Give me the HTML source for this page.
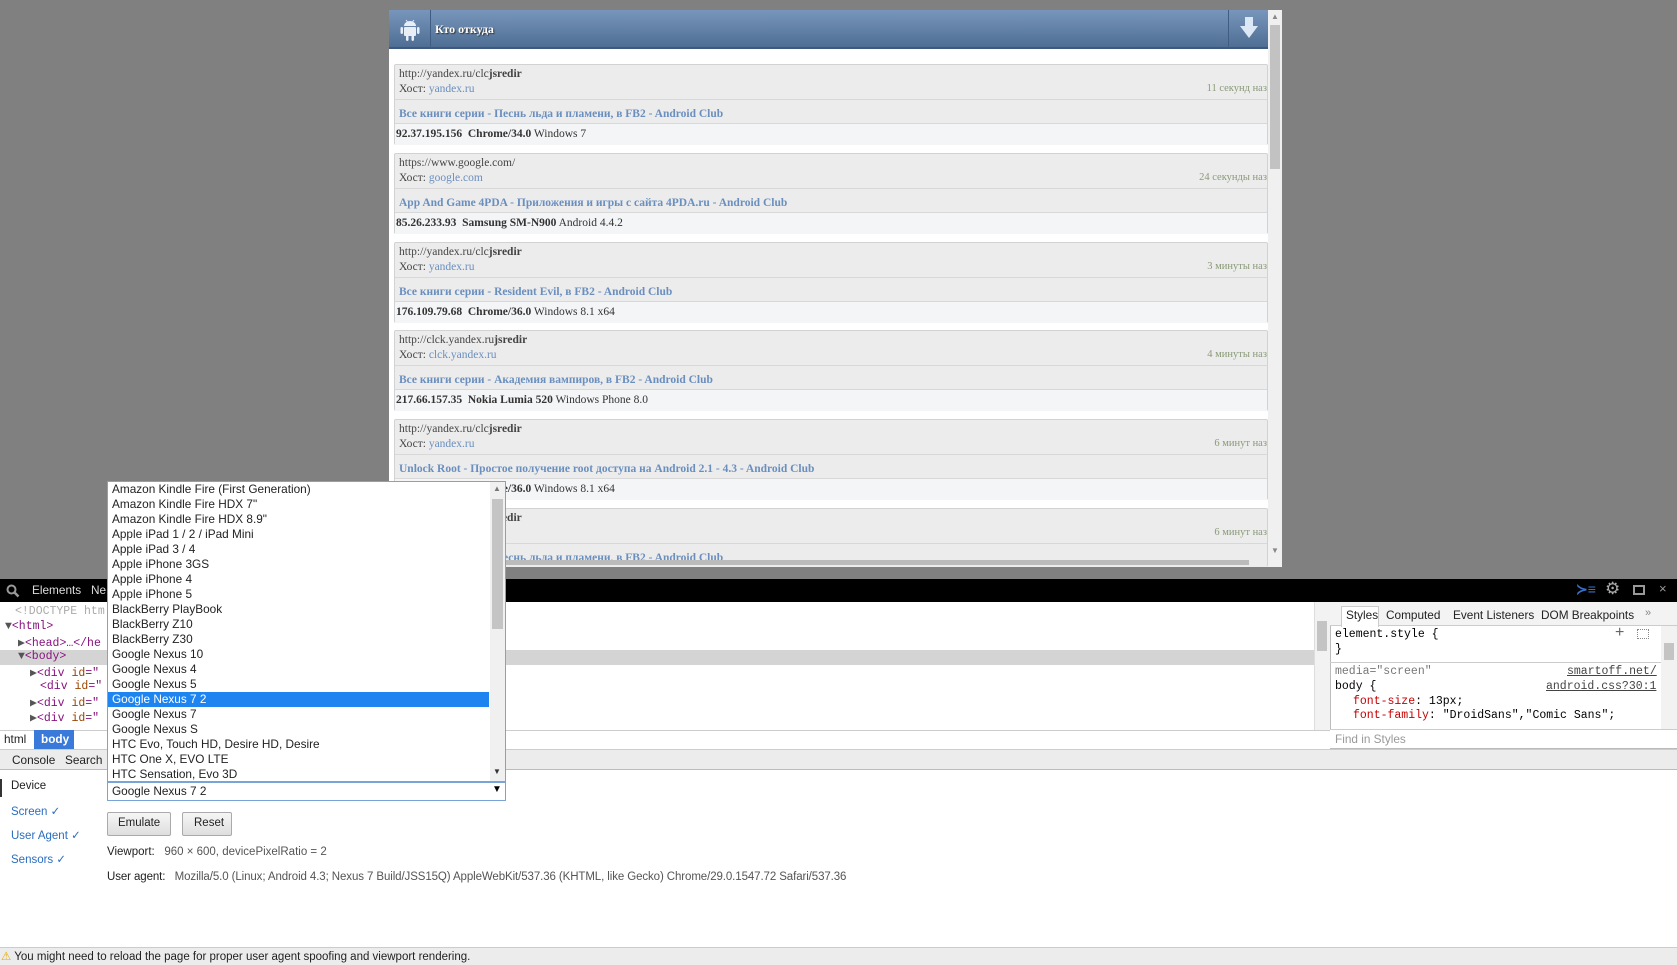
<!DOCTYPE html>
<html><head><meta charset="utf-8">
<style>
*{margin:0;padding:0;box-sizing:border-box}
body{width:1677px;height:965px;position:relative;overflow:hidden;background:#808080;font-family:"Liberation Sans",sans-serif}
.a{position:absolute;white-space:nowrap}
.pg{font-family:"Liberation Serif",serif;font-size:11.5px}
.ent{position:absolute;left:394px;width:874px;height:81px;background:#ececec;border:1px solid #d2d2d2;border-radius:2px}
.ent .u{position:absolute;left:4px;top:3px;color:#444}
.ent .h{position:absolute;left:4px;top:18px;color:#444}
.ent .t{position:absolute;right:0;top:18px;color:#8a9a78;font-size:10.5px}
.ent .d1{position:absolute;left:0;right:0;top:34px;border-top:1px solid #d8d8d8}
.ent .ti{position:absolute;left:4px;top:43px;color:#6a8fbf;font-weight:bold}
.ent .ipr{position:absolute;left:0;right:0;top:58px;height:22px;background:#f4f5f7;border-top:1px solid #d8d8d8}
.ent .ip{position:absolute;left:1px;top:4px;color:#333}
.lk{color:#6a8fbf}
.dt{font-size:11.8px;color:#222}
.em{font-size:11.5px;color:#222}
.mono{font-family:"Liberation Mono",monospace;font-size:11.5px}
.li{position:absolute;left:112px;font-size:11.8px;color:#222;height:15px;line-height:15px}
</style></head><body>

<div class="a" style="left:389px;top:10px;width:893px;height:557px;background:#fff"></div>
<div class="a" style="left:389px;top:10px;width:879px;height:39px;background:linear-gradient(#7896bb,#4f6e94);border-bottom:2px solid #3c5a80"></div>
<div class="a" style="left:430px;top:10px;width:1px;height:39px;background:#3f5d82"></div>
<div class="a" style="left:1228px;top:10px;width:1px;height:39px;background:#3f5d82"></div>
<svg class="a" style="left:398px;top:17px" width="24" height="25" viewBox="0 0 24 25"><g fill="#e8eef6"><path d="M6 9a6 5 0 0 1 12 0z"/><rect x="6" y="10" width="12" height="9" rx="1"/><rect x="2.5" y="10" width="2.5" height="7" rx="1.2"/><rect x="19" y="10" width="2.5" height="7" rx="1.2"/><rect x="8" y="18" width="2.5" height="6" rx="1.2"/><rect x="13.5" y="18" width="2.5" height="6" rx="1.2"/><path d="M8 3l2 2.5M16 3l-2 2.5" stroke="#e8eef6" stroke-width="1"/></g></svg>
<div class="a pg" style="left:435px;top:22px;color:#fff;font-weight:bold;font-size:12px;text-shadow:1px 1px 1px #333">Кто откуда</div>
<svg class="a" style="left:1238px;top:16px" width="22" height="24" viewBox="0 0 22 24"><path d="M7 1h8v9h5L11 22 2 10h5z" fill="#dde8f6"/></svg>
<div class="a" style="left:1268px;top:10px;width:14px;height:557px;background:#f0f0f0"></div>
<div class="a" style="left:1270px;top:25px;width:10px;height:144px;background:#c2c2c2"></div>
<div class="a" style="left:1271px;top:12px;font-size:8px;color:#888">▲</div>
<div class="a" style="left:1271px;top:546px;font-size:8px;color:#888">▼</div>

<div class="pg">
<div class="ent" style="top:64px"><span class="u">http://yandex.ru/clc<b>jsredir</b></span><span class="h">Хост: <span class="lk">yandex.ru</span></span><span class="t">11 секунд наз</span><div class="d1"></div><span class="ti">Все книги серии - Песнь льда и пламени, в FB2 - Android Club</span><div class="ipr"><span class="ip"><b>92.37.195.156 &nbsp;Chrome/34.0</b> Windows 7</span></div></div>
<div class="ent" style="top:153px"><span class="u">https://www.google.com/</span><span class="h">Хост: <span class="lk">google.com</span></span><span class="t">24 секунды наз</span><div class="d1"></div><span class="ti">App And Game 4PDA - Приложения и игры с сайта 4PDA.ru - Android Club</span><div class="ipr"><span class="ip"><b>85.26.233.93 &nbsp;Samsung SM-N900</b> Android 4.4.2</span></div></div>
<div class="ent" style="top:242px"><span class="u">http://yandex.ru/clc<b>jsredir</b></span><span class="h">Хост: <span class="lk">yandex.ru</span></span><span class="t">3 минуты наз</span><div class="d1"></div><span class="ti">Все книги серии - Resident Evil, в FB2 - Android Club</span><div class="ipr"><span class="ip"><b>176.109.79.68 &nbsp;Chrome/36.0</b> Windows 8.1 x64</span></div></div>
<div class="ent" style="top:330px"><span class="u">http://clck.yandex.ru<b>jsredir</b></span><span class="h">Хост: <span class="lk">clck.yandex.ru</span></span><span class="t">4 минуты наз</span><div class="d1"></div><span class="ti">Все книги серии - Академия вампиров, в FB2 - Android Club</span><div class="ipr"><span class="ip"><b>217.66.157.35 &nbsp;Nokia Lumia 520</b> Windows Phone 8.0</span></div></div>
<div class="ent" style="top:419px"><span class="u">http://yandex.ru/clc<b>jsredir</b></span><span class="h">Хост: <span class="lk">yandex.ru</span></span><span class="t">6 минут наз</span><div class="d1"></div><span class="ti">Unlock Root - Простое получение root доступа на Android 2.1 - 4.3 - Android Club</span><div class="ipr"><span class="ip"><b>176.109.79.68 &nbsp;Chrome/36.0</b> Windows 8.1 x64</span></div></div>
<div class="ent" style="top:508px;height:59px;border-bottom:none"><span class="u">http://yandex.ru/clc<b>jsredir</b></span><span class="h">Хост: <span class="lk">yandex.ru</span></span><span class="t">6 минут наз</span><div class="d1"></div><span class="ti">Все книги серии - Песнь льда и пламени, в FB2 - Android Club</span></div>
</div>
<div class="a" style="left:396px;top:560px;width:853px;height:5px;background:#bbb"></div>

<div class="a" style="left:0;top:579px;width:1677px;height:23px;background:#000"></div>
<svg class="a" style="left:6px;top:584px" width="14" height="14" viewBox="0 0 14 14"><circle cx="5.5" cy="5.5" r="4" fill="none" stroke="#999" stroke-width="2"/><path d="M8.5 8.5l4 4" stroke="#999" stroke-width="2.5"/></svg>
<div class="a dt" style="left:32px;top:583px;color:#ddd">Elements</div>
<div class="a dt" style="left:91px;top:583px;color:#ddd">Ne</div>
<div class="a" style="left:1576px;top:581px;color:#3a6fc8;font-size:14px;font-weight:bold">≻≡</div>
<div class="a" style="left:1605px;top:579px;color:#aaa;font-size:17px">⚙</div>
<div class="a" style="left:1633px;top:585px;width:12px;height:10px;border:2px solid #999"></div>
<div class="a" style="left:1659px;top:581px;color:#999;font-size:13px">×</div>

<div class="a" style="left:0;top:602px;width:1330px;height:128px;background:#fff"></div>
<div class="a" style="left:0;top:650px;width:1314px;height:15px;background:#d4d4d4"></div>
<div class="a" style="left:1314px;top:602px;width:16px;height:128px;background:#f2f2f2;border-left:1px solid #ddd"></div>
<div class="a" style="left:1317px;top:621px;width:10px;height:30px;background:#c4c4c4"></div>
<div class="a mono" style="left:15px;top:605px;color:#aaa">&lt;!DOCTYPE htm</div>
<div class="a mono" style="left:5px;top:620px;color:#881280"><span style="color:#555">▼</span>&lt;html&gt;</div>
<div class="a mono" style="left:18px;top:635px;color:#881280"><span style="color:#555">▶</span>&lt;head&gt;…&lt;/he</div>
<div class="a mono" style="left:18px;top:650px;color:#881280"><span style="color:#555">▼</span>&lt;body&gt;</div>
<div class="a mono" style="left:30px;top:665px;color:#881280"><span style="color:#555">▶</span>&lt;div <span style="color:#994500">id</span>="</div>
<div class="a mono" style="left:40px;top:680px;color:#881280">&lt;div <span style="color:#994500">id</span>="</div>
<div class="a mono" style="left:30px;top:695px;color:#881280"><span style="color:#555">▶</span>&lt;div <span style="color:#994500">id</span>="</div>
<div class="a mono" style="left:30px;top:710px;color:#881280"><span style="color:#555">▶</span>&lt;div <span style="color:#994500">id</span>="</div>

<div class="a" style="left:1330px;top:602px;width:347px;height:147px;background:#fff;border-left:1px solid #bbb"></div>
<div class="a" style="left:1330px;top:602px;width:347px;height:24px;background:#f3f3f3;border-bottom:1px solid #ccc"></div>
<div class="a" style="left:1341px;top:606px;width:38px;height:21px;background:#fff;border:1px solid #ccc;border-bottom:none"></div>
<div class="a dt" style="left:1346px;top:608px">Styles</div>
<div class="a dt" style="left:1386px;top:608px">Computed</div>
<div class="a dt" style="left:1453px;top:608px">Event Listeners</div>
<div class="a dt" style="left:1541px;top:608px">DOM Breakpoints</div>
<div class="a" style="left:1645px;top:607px;font-size:11px;color:#888">»</div>
<div class="a mono" style="left:1335px;top:628px">element.style {</div>
<div class="a mono" style="left:1335px;top:643px">}</div>
<div class="a" style="left:1615px;top:624px;font-size:16px;color:#666">+</div>
<div class="a" style="left:1637px;top:629px;width:12px;height:10px;border:1px dotted #888"></div>
<div class="a" style="left:1330px;top:662px;width:331px;border-top:1px solid #ccc"></div>
<div class="a" style="left:1661px;top:626px;width:16px;height:104px;background:#f2f2f2"></div>
<div class="a" style="left:1664px;top:643px;width:10px;height:17px;background:#c4c4c4"></div>
<div class="a mono" style="left:1335px;top:665px;color:#777">media="screen"</div>
<div class="a mono" style="left:1567px;top:665px;color:#444;text-decoration:underline">smartoff.net/</div>
<div class="a mono" style="left:1335px;top:680px">body {</div>
<div class="a mono" style="left:1546px;top:680px;color:#444;text-decoration:underline">android.css?30:1</div>
<div class="a mono" style="left:1353px;top:695px"><span style="color:#c80000">font-size</span>: 13px;</div>
<div class="a mono" style="left:1353px;top:709px"><span style="color:#c80000">font-family</span>: "DroidSans","Comic Sans";</div>
<div class="a" style="left:1330px;top:729px;width:347px;height:20px;background:#fff;border-top:1px solid #ccc;border-bottom:1px solid #bbb"></div>
<div class="a" style="left:1335px;top:732px;font-size:11.8px;color:#999">Find in Styles</div>

<div class="a" style="left:0;top:730px;width:1330px;height:19px;background:#fff;border-top:1px solid #ccc"></div>
<div class="a dt" style="left:4px;top:732px">html</div>
<div class="a" style="left:34px;top:730px;width:40px;height:19px;background:#3879d9"></div>
<div class="a dt" style="left:41px;top:732px;color:#fff;font-weight:bold">body</div>
<div class="a" style="left:0;top:749px;width:1677px;height:21px;background:#ececec;border-top:1px solid #ccc;border-bottom:1px solid #bbb"></div>
<div class="a dt" style="left:12px;top:753px">Console</div>
<div class="a dt" style="left:65px;top:753px">Search</div>

<div class="a" style="left:0;top:770px;width:1677px;height:177px;background:#fff"></div>
<div class="a" style="left:0;top:779px;width:2px;height:18px;background:#333"></div>
<div class="a em" style="left:11px;top:780px">Device</div>
<div class="a em" style="left:11px;top:804px;color:#2a6dbf">Screen ✓</div>
<div class="a em" style="left:11px;top:828px;color:#2a6dbf">User Agent ✓</div>
<div class="a em" style="left:11px;top:852px;color:#2a6dbf">Sensors ✓</div>
<div class="a" style="left:107px;top:782px;width:399px;height:19px;border:1px solid #7aa3d8;background:#fff"></div>
<div class="a dt" style="left:112px;top:784px">Google Nexus 7 2</div>
<div class="a" style="left:492px;top:784px;font-size:10px">▼</div>
<div class="a" style="left:107px;top:812px;width:64px;height:24px;border:1px solid #aaa;border-radius:2px;background:linear-gradient(#f6f6f6,#dedede)"></div>
<div class="a em" style="left:118px;top:817px">Emulate</div>
<div class="a" style="left:182px;top:812px;width:50px;height:24px;border:1px solid #aaa;border-radius:2px;background:linear-gradient(#f6f6f6,#dedede)"></div>
<div class="a em" style="left:194px;top:817px">Reset</div>
<div class="a em" style="left:107px;top:846px">Viewport: &nbsp;&nbsp;<span style="color:#555">960 × 600, devicePixelRatio = 2</span></div>
<div class="a em" style="left:107px;top:871px;letter-spacing:-0.1px">User agent: &nbsp;&nbsp;<span style="color:#555">Mozilla/5.0 (Linux; Android 4.3; Nexus 7 Build/JSS15Q) AppleWebKit/537.36 (KHTML, like Gecko) Chrome/29.0.1547.72 Safari/537.36</span></div>
<div class="a" style="left:0;top:947px;width:1677px;height:18px;background:#ececec;border-top:1px solid #ccc"></div>
<div class="a em" style="left:1px;top:949px"><span style="color:#e0a800">⚠</span> You might need to reload the page for proper user agent spoofing and viewport rendering.</div>

<div class="a" style="left:107px;top:481px;width:399px;height:301px;background:#fff;border:1px solid #7aa3d8"></div>
<div class="a" style="left:490px;top:482px;width:15px;height:299px;background:#f0f0f0"></div>
<div class="a" style="left:492px;top:499px;width:11px;height:130px;background:#c4c4c4"></div>
<div class="a" style="left:493px;top:484px;font-size:8px;color:#777">▲</div>
<div class="a" style="left:493px;top:767px;font-size:8px;color:#333">▼</div>
<div class="a" style="left:108px;top:692px;width:381px;height:15px;background:#1e84f0"></div>
<div class="li" style="top:482px">Amazon Kindle Fire (First Generation)</div>
<div class="li" style="top:497px">Amazon Kindle Fire HDX 7"</div>
<div class="li" style="top:512px">Amazon Kindle Fire HDX 8.9"</div>
<div class="li" style="top:527px">Apple iPad 1 / 2 / iPad Mini</div>
<div class="li" style="top:542px">Apple iPad 3 / 4</div>
<div class="li" style="top:557px">Apple iPhone 3GS</div>
<div class="li" style="top:572px">Apple iPhone 4</div>
<div class="li" style="top:587px">Apple iPhone 5</div>
<div class="li" style="top:602px">BlackBerry PlayBook</div>
<div class="li" style="top:617px">BlackBerry Z10</div>
<div class="li" style="top:632px">BlackBerry Z30</div>
<div class="li" style="top:647px">Google Nexus 10</div>
<div class="li" style="top:662px">Google Nexus 4</div>
<div class="li" style="top:677px">Google Nexus 5</div>
<div class="li" style="top:692px;color:#fff">Google Nexus 7 2</div>
<div class="li" style="top:707px">Google Nexus 7</div>
<div class="li" style="top:722px">Google Nexus S</div>
<div class="li" style="top:737px">HTC Evo, Touch HD, Desire HD, Desire</div>
<div class="li" style="top:752px">HTC One X, EVO LTE</div>
<div class="li" style="top:767px">HTC Sensation, Evo 3D</div>
</body></html>
